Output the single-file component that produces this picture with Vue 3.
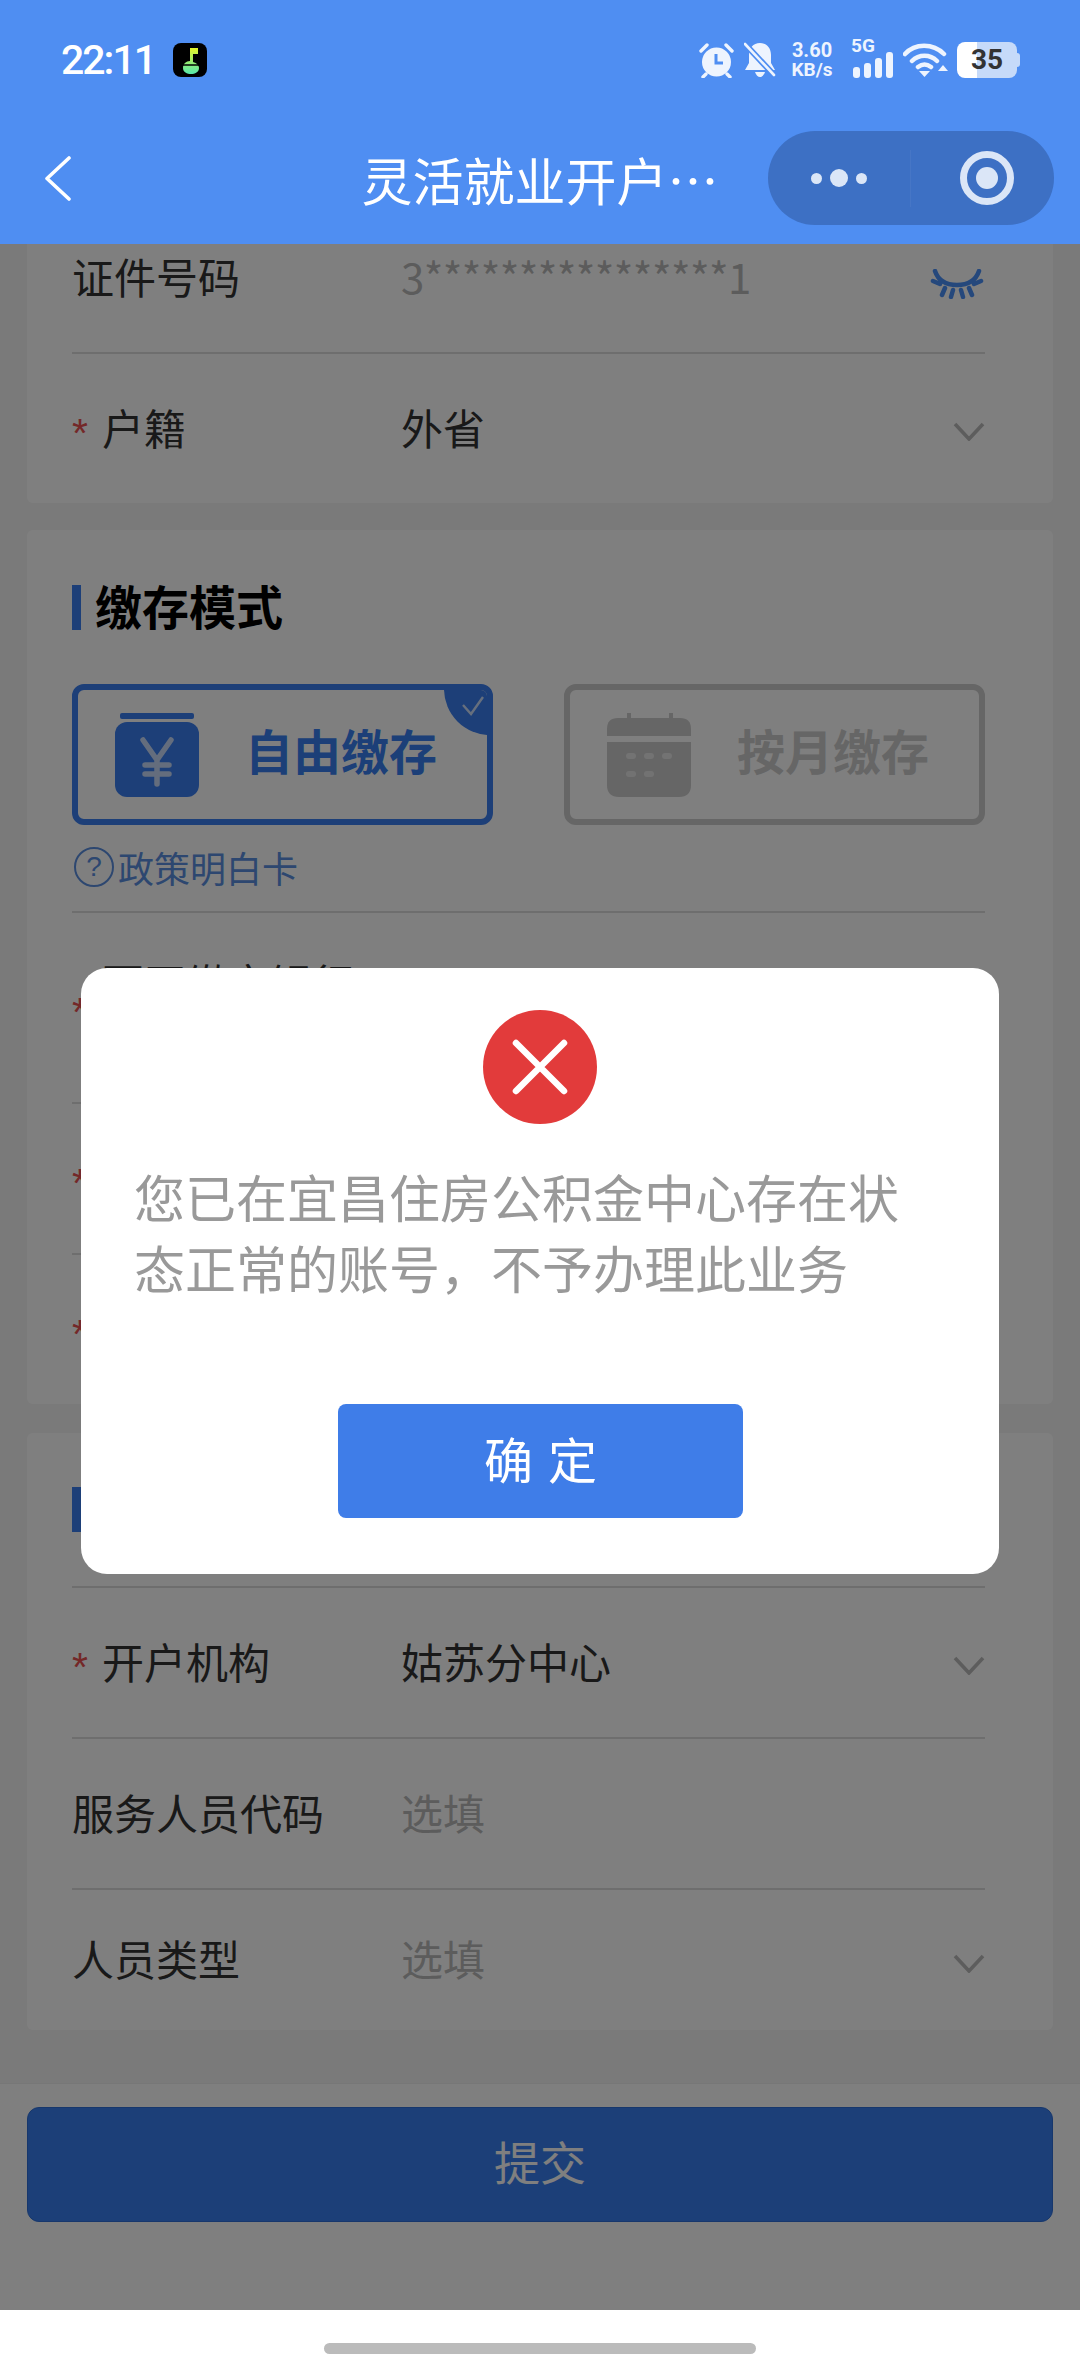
<template>
  <div class="page">
    <header class="header">
      <div class="status">
        <div class="status__left">
          <span class="time">22:11</span>
          <span class="music">
            <svg width="34" height="34" viewBox="0 0 34 34">
              <defs>
                <linearGradient id="note" x1="0" y1="0" x2="0" y2="1">
                  <stop offset="0" stop-color="#e4f52a" />
                  <stop offset="1" stop-color="#56e6ad" />
                </linearGradient>
              </defs>
              <path d="M17 5h8v6h-5v8c4 1 6 4 6 6 0 4-4 6-8 6s-8-2-8-6c0-4 3-7 7-7z" fill="url(#note)" />
              <path d="M8 22h18" stroke="#000" stroke-width="1.5" />
            </svg>
          </span>
        </div>
        <div class="status__right">
          <svg class="ic-alarm" width="37" height="36" viewBox="0 0 37 36">
            <circle cx="18.5" cy="20" r="14.5" fill="#eef4fe" />
            <path d="M18 12v9h7" fill="none" stroke="#4f8ef2" stroke-width="3" />
            <path d="M3 9l6-6M34 9l-6-6M8 32l-3 3M29 32l3 3" stroke="#eef4fe" stroke-width="3.4" stroke-linecap="round" />
          </svg>
          <svg class="ic-bell" width="32" height="36" viewBox="0 0 32 36">
            <path d="M16 1c7 0 11 5 11 12v8l4 7H1l4-7v-8C5 6 9 1 16 1zM11 30h10c-1 3-3 5-5 5s-4-2-5-5z" fill="#eef4fe" />
            <path d="M1 2l30 32" stroke="#4f8ef2" stroke-width="6" />
            <path d="M1 2l29 31" stroke="#eef4fe" stroke-width="2.6" stroke-linecap="round" />
          </svg>
          <div class="speed">
            <span class="speed__num">3.60</span>
            <span class="speed__unit">KB/s</span>
          </div>
          <div class="signal">
            <span class="signal__label">5G</span>
            <svg width="40" height="26" viewBox="0 0 40 26">
              <rect x="0" y="15" width="7" height="11" rx="3" fill="#eef4fe" />
              <rect x="11" y="11" width="7" height="15" rx="3" fill="#eef4fe" />
              <rect x="22" y="6" width="7" height="20" rx="3" fill="#eef4fe" />
              <rect x="33" y="0" width="7" height="26" rx="3" fill="#eef4fe" />
            </svg>
          </div>
          <svg class="ic-wifi" width="45" height="36" viewBox="0 0 45 36">
            <path d="M2 12C12 1 30 1 41 12M9 19c7-7 18-7 25 0M15 25c4-3 9-3 13 0" fill="none" stroke="#eef4fe" stroke-width="4.500" stroke-linecap="round" />
            <path d="M16 29h11l-5.500 6z" fill="#eef4fe" />
            <path d="M35 29h10l-5-6z" fill="#eef4fe" />
          </svg>
          <div class="battery">35</div>
        </div>
      </div>
      <nav class="nav">
        <svg class="nav__back" width="27" height="45" viewBox="0 0 27 45">
          <path d="M25 2L3 22.500 25 43" fill="none" stroke="#fff" stroke-width="3.600" stroke-linecap="round" stroke-linejoin="round" />
        </svg>
        <div class="nav__title">灵活就业开户…</div>
        <div class="capsule">
          <div class="capsule__part">
            <span class="dot"></span>
            <span class="dot dot--big"></span>
            <span class="dot"></span>
          </div>
          <div class="capsule__part capsule__part--target">
            <span class="target"></span>
          </div>
        </div>
      </nav>
    </header>

    <div class="content">
      <main class="body">
        <section class="card card--first">
          <div class="row">
            <span class="row__label">证件号码</span>
            <span class="row__value row__value--mask row__value--id">3****************1</span>
            <svg class="eye" width="54" height="30" viewBox="0 0 54 30">
              <path d="M5 2c3 9 11 14 22 14s19-5 22-14M3 12l7 3M51 12l-7 3M15 19l-3 7M23 21l-2 7M31 21l2 7M39 19l3 7" fill="none" stroke="#4a90f8" stroke-width="4.500" stroke-linecap="round" />
            </svg>
          </div>
          <div class="row row--last">
            <span class="row__label"><i class="star">*</i>户籍</span>
            <span class="row__value">外省</span>
            <svg class="chevron" width="32" height="19" viewBox="0 0 32 19">
              <path d="M2 2l14 15L30 2" fill="none" stroke="#bbb" stroke-width="3.600" />
            </svg>
          </div>
        </section>

        <section class="card card--mode">
          <h2 class="title">缴存模式</h2>
          <div class="options">
            <div class="option option--active">
              <svg width="84" height="84" viewBox="0 0 84 84">
                <rect x="5" y="0" width="74" height="6" rx="2" fill="#3a7ef0" />
                <rect x="0" y="9" width="84" height="75" rx="12" fill="#3a7ef0" />
                <path d="M28 27l14 20 14-20M42 47v24M30 52h24M30 61h24" fill="none" stroke="#fff" stroke-opacity=".72" stroke-width="5.500" stroke-linecap="round" stroke-linejoin="round" />
              </svg>
              <span class="option__text">自由缴存</span>
              <span class="option__corner">
                <svg width="24" height="22" viewBox="0 0 24 22">
                  <path d="M2 10l8 9L22 2" fill="none" stroke="#fff" stroke-opacity=".75" stroke-width="2.400" />
                </svg>
              </span>
            </div>
            <div class="option">
              <svg width="84" height="84" viewBox="0 0 84 84">
                <path d="M20 0h4v5h-4zM62 0h4v5h-4z" fill="#ccc" />
                <path d="M0 23v-7q0-11 11-11h62q11 0 11 11v7z" fill="#ccc" />
                <path d="M0 29h84v43q0 12-12 12H12Q0 84 0 72z" fill="#ccc" />
                <g fill="#fff" opacity=".5">
                  <rect x="19" y="40" width="10" height="6" rx="3" />
                  <rect x="37" y="40" width="10" height="6" rx="3" />
                  <rect x="55" y="40" width="10" height="6" rx="3" />
                  <rect x="19" y="58" width="10" height="6" rx="3" />
                  <rect x="37" y="58" width="10" height="6" rx="3" />
                </g>
              </svg>
              <span class="option__text">按月缴存</span>
            </div>
          </div>
          <div class="policy">
            <span class="policy__icon">?</span>
            <span>政策明白卡</span>
          </div>
          <div class="row row--tall">
            <span class="row__label"><i class="star">*</i><span class="row__peek">更正缴交银行</span></span>
          </div>
          <div class="row">
            <span class="row__label"><i class="star">*</i></span>
          </div>
          <div class="row row--last">
            <span class="row__label"><i class="star">*</i></span>
          </div>
        </section>

        <section class="card card--org">
          <div class="title title--org"></div>
          <div class="row">
            <span class="row__label"><i class="star">*</i>开户机构</span>
            <span class="row__value">姑苏分中心</span>
            <svg class="chevron" width="32" height="19" viewBox="0 0 32 19">
              <path d="M2 2l14 15L30 2" fill="none" stroke="#bbb" stroke-width="3.600" />
            </svg>
          </div>
          <div class="row">
            <span class="row__label">服务人员代码</span>
            <span class="row__value row__value--mask">选填</span>
          </div>
          <div class="row row--end">
            <span class="row__label">人员类型</span>
            <span class="row__value row__value--mask">选填</span>
            <svg class="chevron" width="32" height="19" viewBox="0 0 32 19">
              <path d="M2 2l14 15L30 2" fill="none" stroke="#bbb" stroke-width="3.600" />
            </svg>
          </div>
        </section>
      </main>

      <footer class="footer">
        <button class="submit">提交</button>
      </footer>

      <div class="scrim">
        <div class="modal">
          <svg class="modal__icon" width="114" height="114" viewBox="0 0 114 114">
            <circle cx="57" cy="57" r="57" fill="#e23b3b" />
            <path d="M33 33l48 48M81 33L33 81" stroke="#fff" stroke-width="6.500" stroke-linecap="round" />
          </svg>
          <p class="modal__text">您已在宜昌住房公积金中心存在状态正常的账号，不予办理此业务</p>
          <button class="modal__btn">确 定</button>
        </div>
      </div>
    </div>

    <div class="home">
      <span class="home__bar"></span>
    </div>
  </div>
</template>

<script setup>
</script>

<style>
  html, body {
    margin: 0;
    background: #fff;
  }
</style>

<style scoped>
  .page {
    display: flex;
    flex-direction: column;
    width: 1080px;
    height: 2376px;
    overflow: hidden;
    font-family: "Noto Sans CJK SC", "Noto Sans", sans-serif;
  }
  .header {
    flex: none;
    height: 244px;
    background: #4f8ef2;
  }
  .status {
    display: flex;
    justify-content: space-between;
    align-items: center;
    height: 120px;
    padding: 0 60px 0 61px;
  }
  .status__left, .status__right {
    display: flex;
    align-items: center;
  }
  .time {
    font: 500 41px/1 Roboto, sans-serif;
    letter-spacing: -2px;
    color: #fff;
  }
  .music {
    display: flex;
    margin-left: 18px;
    background: #000;
    border-radius: 8px;
  }
  .ic-bell {
    margin-left: 9px;
  }
  .speed {
    display: flex;
    flex-direction: column;
    align-items: center;
    width: 44px;
    margin-left: 14px;
    color: #eef4fe;
    font-family: Roboto, sans-serif;
    font-weight: 700;
  }
  .speed__num {
    font-size: 20px;
    line-height: 20px;
  }
  .speed__unit {
    font-size: 19px;
    line-height: 20px;
  }
  .signal {
    position: relative;
    margin-left: 19px;
    padding-top: 10px;
    display: flex;
  }
  .signal__label {
    position: absolute;
    top: -7px;
    left: -2px;
    color: #eef4fe;
    font: 700 19px/1.2 Roboto, sans-serif;
  }
  .ic-wifi {
    margin-left: 10px;
  }
  .battery {
    position: relative;
    width: 60px;
    height: 36px;
    margin-left: 9px;
    margin-right: 3px;
    border-radius: 8px;
    background: linear-gradient(90deg, #fff 33%, #c6daf9 33%);
    color: #333;
    font: 700 28px/36px Roboto, sans-serif;
    text-align: center;
  }
  .battery::after {
    content: "";
    position: absolute;
    right: -3px;
    top: 11px;
    width: 3px;
    height: 14px;
    border-radius: 0 3px 3px 0;
    background: #c6daf9;
  }
  .nav {
    display: grid;
    grid-template-columns: 1fr auto 1fr;
    align-items: center;
    height: 116px;
    padding-bottom: 8px;
  }
  .nav__back {
    margin-left: 44px;
  }
  .nav__title {
    color: #fff;
    font-size: 51px;
    line-height: 1;
    padding-top: 2px;
  }
  .capsule {
    display: flex;
    justify-self: end;
    width: 286px;
    height: 94px;
    margin-right: 26px;
    border-radius: 47px;
    background: #3d70c4;
  }
  .capsule__part {
    flex: none;
    width: 142px;
    display: flex;
    align-items: center;
    justify-content: center;
    gap: 5px;
    box-sizing: border-box;
  }
  .capsule__part--target {
    position: relative;
    width: 144px;
    padding-left: 10px;
  }
  .capsule__part--target::before {
    content: "";
    position: absolute;
    left: 0;
    top: 19px;
    bottom: 18px;
    width: 1px;
    background: #4676c6;
  }
  .dot {
    width: 11px;
    height: 11px;
    border-radius: 50%;
    background: #dbe6f7;
  }
  .dot--big {
    width: 18px;
    height: 18px;
    margin: 0 3px;
  }
  .target {
    position: relative;
    width: 22px;
    height: 22px;
    border-radius: 50%;
    background: #dbe6f7;
  }
  .target::before {
    content: "";
    position: absolute;
    left: -16px;
    top: -16px;
    width: 40px;
    height: 40px;
    border: 7px solid #dbe6f7;
    border-radius: 50%;
  }
  .content {
    position: relative;
    flex: 1;
    min-height: 0;
    display: flex;
    flex-direction: column;
    background: #f5f5f5;
  }
  .body {
    flex: 1;
    min-height: 0;
    overflow: hidden;
    padding: 0 27px;
  }
  .card {
    padding: 0 68px 0 45px;
    background: #fff;
    border-radius: 6px;
  }
  .card--first {
    margin-top: -41px;
  }
  .card--mode {
    margin-top: 27px;
    padding-top: 55px;
  }
  .card--org {
    margin-top: 29px;
    padding-top: 54px;
  }
  .title {
    display: flex;
    align-items: center;
    box-sizing: border-box;
    height: 45px;
    margin: 0;
    padding: 0 0 5px 14px;
    border-left: 9px solid #3a7ef0;
    color: #000;
    font-size: 47px;
    font-weight: 700;
    line-height: 40px;
  }
  .title--org {
    position: relative;
    margin-bottom: 56px;
  }
  .title--org::after {
    content: "";
    position: absolute;
    left: -9px;
    right: 0;
    bottom: -56px;
    height: 2px;
    background: #dcdcdc;
  }
  .options {
    display: flex;
    justify-content: space-between;
    margin-top: 54px;
  }
  .option {
    position: relative;
    display: flex;
    align-items: flex-end;
    box-sizing: border-box;
    width: 421px;
    height: 141px;
    padding: 0 0 22px 37px;
    border: 6px solid #ccc;
    border-radius: 12px;
    overflow: hidden;
  }
  .option--active {
    border-color: #3a7ef0;
  }
  .option__text {
    align-self: center;
    margin-top: 10px;
    margin-left: 46px;
    color: #ccc;
    font-size: 48px;
    font-weight: 700;
    line-height: 1;
  }
  .option--active .option__text {
    color: #387ef0;
  }
  .option__corner {
    position: absolute;
    top: -6px;
    right: -6px;
    width: 49px;
    height: 51px;
    display: flex;
    align-items: center;
    justify-content: center;
    padding: 0 0 8px 8px;
    box-sizing: border-box;
    background: #3a7ef0;
    border-bottom-left-radius: 46px;
  }
  .policy {
    display: flex;
    align-items: center;
    gap: 4px;
    height: 88px;
    border-bottom: 2px solid #dcdcdc;
    box-sizing: border-box;
    color: #5b8fe0;
    font-size: 36px;
    padding: 0 0 3px 2px;
  }
  .policy__icon {
    display: flex;
    align-items: center;
    justify-content: center;
    box-sizing: border-box;
    width: 40px;
    height: 40px;
    border: 2px solid #5b8fe0;
    border-radius: 50%;
    font-family: "Liberation Sans", sans-serif;
    font-size: 28px;
  }
  .row {
    display: flex;
    align-items: center;
    box-sizing: border-box;
    height: 151px;
    border-bottom: 2px solid #dcdcdc;
    font-size: 42px;
    color: #333;
  }
  .row--tall {
    height: 191px;
  }
  .row--last {
    height: 149px;
    border-bottom: 0;
  }
  .row--end {
    height: 140px;
    border-bottom: 0;
  }
  .row__label {
    display: flex;
    align-items: center;
    flex: none;
    width: 329px;
    padding-bottom: 5px;
    line-height: 55px;
  }
  .row__value {
    flex: 1;
    padding-bottom: 5px;
    line-height: 55px;
  }
  .row__value--mask {
    color: #b8b8b8;
  }
  .row__value--id {
    letter-spacing: -0.6px;
  }
  .row__peek {
    margin-bottom: 48px;
  }
  .star {
    flex: none;
    width: 30px;
    padding-top: 14px;
    color: #e85050;
    font: normal 41px/41px "Liberation Sans", sans-serif;
  }
  .eye {
    flex: none;
    margin-top: 13px;
    margin-right: 1px;
  }
  .chevron {
    flex: none;
    margin-top: 6px;
  }
  .footer {
    flex: none;
    height: 227px;
    box-sizing: border-box;
    padding: 23px 27px 0;
    background: #fff;
    border-top: 1px solid #eee;
  }
  .submit {
    display: block;
    width: 100%;
    height: 115px;
    padding: 0 0 10px;
    border: 1px solid #2f6fd8;
    border-radius: 12px;
    background: #387ef0;
    color: #fff;
    font-family: inherit;
    font-size: 46px;
  }
  .scrim {
    position: absolute;
    inset: 0;
    display: flex;
    align-items: center;
    justify-content: center;
    padding-bottom: 12px;
    box-sizing: border-box;
    background: rgba(0, 0, 0, 0.5);
  }
  .modal {
    display: flex;
    flex-direction: column;
    align-items: center;
    box-sizing: border-box;
    width: 918px;
    height: 606px;
    padding-top: 42px;
    background: #fff;
    border-radius: 26px;
  }
  .modal__icon {
    flex: none;
  }
  .modal__text {
    align-self: stretch;
    height: 140px;
    margin: 37px 0 0;
    padding: 0 50px 0 53px;
    color: #999;
    font-size: 51px;
    line-height: 71px;
  }
  .modal__btn {
    width: 405px;
    height: 114px;
    margin-top: 103px;
    padding: 0 0 8px 3px;
    border: 0;
    border-radius: 8px;
    background: #3f7de8;
    color: #fff;
    font-family: inherit;
    font-size: 49px;
    letter-spacing: 2px;
  }
  .home {
    flex: none;
    height: 66px;
    box-sizing: border-box;
    padding-top: 33px;
    display: flex;
    justify-content: center;
    background: #fff;
  }
  .home__bar {
    width: 432px;
    height: 11px;
    border-radius: 6px;
    background: #bbb;
  }
</style>
